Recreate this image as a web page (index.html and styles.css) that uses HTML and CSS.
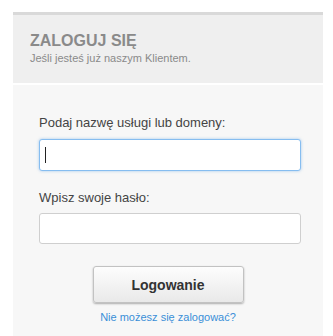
FILE: index.html
```html
<!DOCTYPE html>
<html lang="pl">
<head>
  <meta charset="UTF-8" />
  <title>Zaloguj się</title>
  <link rel="stylesheet" href="styles.css">
</head>
<body>
  <div class="login-panel">
    <div class="login-head">
      <h1>ZALOGUJ SIĘ</h1>
      <p>Jeśli jesteś już naszym Klientem.</p>
    </div>

    <form class="login-body">
      <label for="domain">Podaj nazwę usługi lub domeny:</label>
      <div class="field">
        <input type="text" id="domain" class="focused" />
        <span class="caret"></span>
      </div>

      <label for="pass" class="second">Wpisz swoje hasło:</label>
      <div class="field">
        <input type="password" id="pass" />
      </div>

      <div class="actions">
        <button type="button">Logowanie</button>
        <a href="#">Nie możesz się zalogować?</a>
      </div>
    </form>
  </div>
</body>
</html>
```

FILE: styles.css
```css
* {
  box-sizing: border-box;
}

body {
  margin: 0;
  background: #fff;
  font-family: "Liberation Sans", Arial, sans-serif;
}

.login-panel {
  width: 310px;
  margin: 12px 0 0 13px;
}

.login-head {
  border-top: 3px solid #d9d9d9;
  background: #efefef;
  padding: 16px 17px 18px;
}

.login-head h1 {
  margin: 0;
  font-size: 16px;
  line-height: 20px;
  font-weight: bold;
  color: #8a8a8a;
}

.login-head p {
  margin: 0;
  font-size: 11px;
  line-height: 14px;
  color: #8a8a8a;
}

.login-body {
  margin: 2px 0 0;
  background: #f7f7f7;
  padding: 30px 22px 16px 26px;
}

.login-body label {
  display: block;
  font-size: 13px;
  line-height: 16px;
  color: #444;
  margin-bottom: 8px;
}

.login-body label.second {
  margin-top: 19px;
  margin-bottom: 7px;
}

.field {
  position: relative;
}

.field input {
  display: block;
  width: 262px;
  height: 31px;
  margin: 0;
  border: 1px solid #cfcfcf;
  border-radius: 3px;
  background: #fff;
  outline: none;
  font-family: inherit;
  font-size: 14px;
}

.field input.focused {
  height: 32px;
  border-color: #86bdf0;
  box-shadow: 0 0 3px rgba(90, 160, 230, 0.55);
}

.caret {
  position: absolute;
  left: 6px;
  top: 8px;
  width: 1px;
  height: 16px;
  background: #222;
}

.actions {
  display: flex;
  flex-direction: column;
  align-items: center;
  margin-top: 22px;
  margin-left: -4px;
}

.actions button {
  width: 151px;
  height: 37px;
  border: 1px solid #c2c2c2;
  border-radius: 3px;
  background: linear-gradient(#fdfdfd, #e9e9e9);
  box-shadow: 0 1px 2px rgba(0, 0, 0, 0.3);
  font-family: inherit;
  font-size: 14px;
  font-weight: bold;
  color: #333;
}

.actions a {
  margin-top: 7px;
  font-size: 11px;
  line-height: 14px;
  color: #3a8fd8;
  text-decoration: none;
}
```
